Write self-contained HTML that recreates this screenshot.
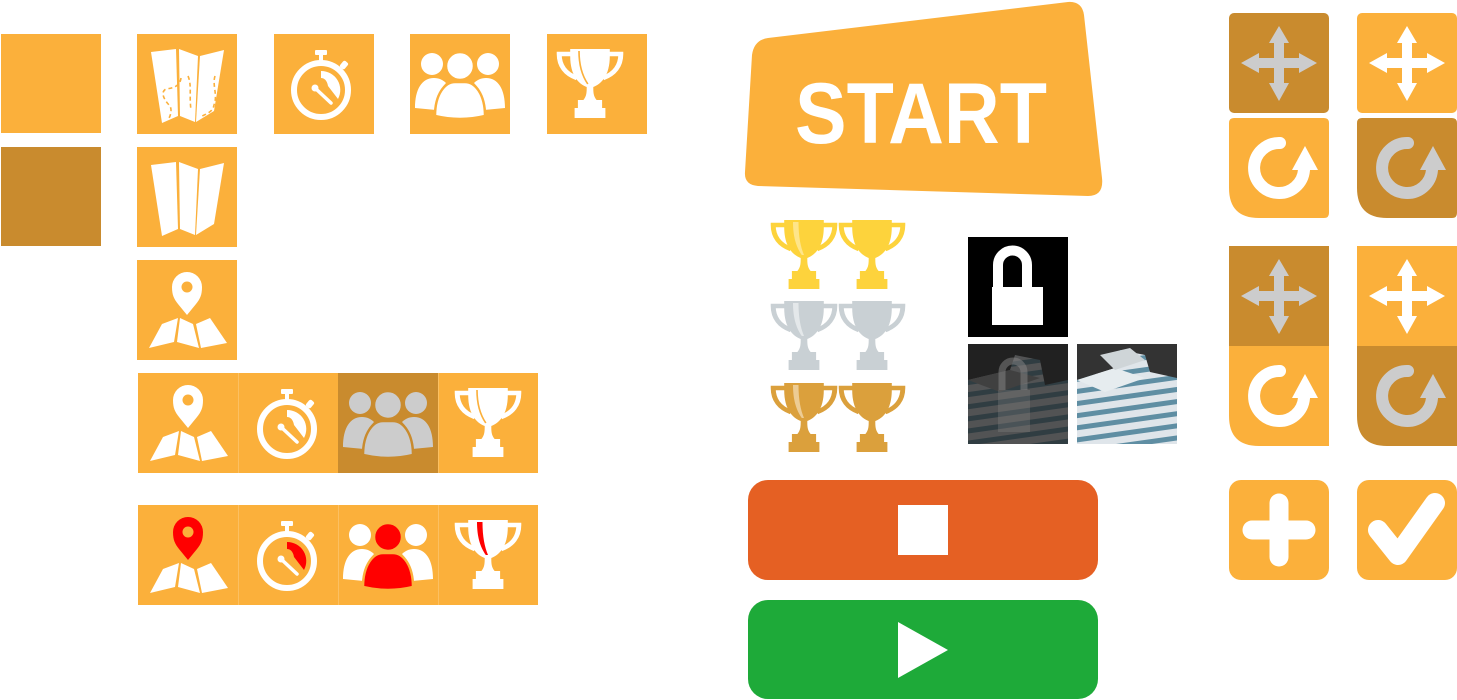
<!DOCTYPE html>
<html><head><meta charset="utf-8"><style>
html,body{margin:0;padding:0;background:#fff;width:1457px;height:700px;overflow:hidden}
svg{display:block}
</style></head><body>
<svg width="1457" height="700" viewBox="0 0 1457 700" xmlns="http://www.w3.org/2000/svg">
<defs>
<g id="trophy">
 <path d="M32,15 H68 V22 C68,42 60,50 53,53 C53,58 53,62 56,66 H61 V74 H64 V84 H36 V74 H39 V66 H44 C47,62 47,58 47,53 C40,50 32,42 32,22 Z" fill="currentColor"/>
 <path d="M33,20 H22 C22,32 28,40 38,44 M67,20 H78 C78,32 72,40 62,44" fill="none" stroke="currentColor" stroke-width="4.5"/>
 <path d="M40,17 L45,17 C45,32 47,42 50,50 L48,50 C43,42 40,32 40,17 Z" style="fill:var(--stripe,none)"/>
 <path d="M40,17 C40,32 43,42 48,50" fill="none" style="stroke:var(--sline,none)" stroke-width="1.5"/>
</g>
<g id="watch">
 <circle cx="47" cy="56" r="27" fill="none" stroke="#fff" stroke-width="6"/>
 <rect x="41" y="16" width="12" height="5" rx="1" fill="#fff"/>
 <rect x="45" y="20" width="4" height="7" fill="#fff"/>
 <rect x="67" y="27" width="6" height="8" rx="2" transform="rotate(40 70 31)" fill="#fff"/>
 <path d="M47,37 A19,19 0 0,1 64,65 L54,52 C53,46 50,44 47,44 Z" style="fill:var(--wedge,#fff)"/>
 <path d="M41,54 L57,69" stroke="#fff" stroke-width="3.5" stroke-linecap="round"/>
 <circle cx="41" cy="54" r="3.5" fill="#fff"/>
</g>
<g id="people">
 <circle cx="22" cy="30" r="11" fill="currentColor"/>
 <circle cx="78" cy="30" r="11" fill="currentColor"/>
 <path d="M5,74 C5,55 12,44 24,44 C29,44 33,46 36,49 C29,56 26,65 26,76 Z" fill="currentColor"/>
 <path d="M95,74 C95,55 88,44 76,44 C71,44 67,46 64,49 C71,56 74,65 74,76 Z" fill="currentColor"/>
 <circle cx="50" cy="32" r="14" style="fill:var(--mid,currentColor);stroke:var(--bg)" stroke-width="2.5"/>
 <path d="M25,82 C25,60 35,48 45,48 H55 C65,48 75,60 75,82 Q50,88 25,82 Z" style="fill:var(--mid,currentColor);stroke:var(--bg)" stroke-width="2.5"/>
</g>
<g id="mapfold" fill="#fff">
 <path d="M14,18 L39,15 L41,82 L25,89 Z"/>
 <path d="M42,15 L61,22 L58,88 L43,82 Z"/>
 <path d="M63,22 L87,16 L77,77 L59,88 Z"/>
</g>
<g id="pinmap">
 <path d="M50,55 L41,44 C37,39 35,35 35,27 A15,15 0 0,1 65,27 C65,35 63,39 59,44 Z" style="fill:var(--pin,#fff)"/>
 <circle cx="50" cy="27" r="5.5" fill="#FBB03B"/>
 <g fill="#fff">
 <path d="M25,64 L41,58 L37,82 L12,88 Z"/>
 <path d="M43,58 L56,64 L62,88 L40,82 Z"/>
 <path d="M59,64 L73,58 L90,83 L64,88 Z"/>
 </g>
</g>
<path id="move" d="M50,13 L60,30 L55,30 L55,45 L70,45 L70,40 L88,50 L70,60 L70,55 L55,55 L55,70 L60,70 L50,88 L40,70 L45,70 L45,55 L30,55 L30,60 L12,50 L30,40 L30,45 L45,45 L45,30 L40,30 Z" fill="currentColor"/>
<g id="rot">
 <path d="M51,25 A25,25 0 1,0 75,52" fill="none" stroke="currentColor" stroke-width="12" stroke-linecap="round"/>
 <path d="M63,52 L76,28 L89,52 Z" fill="currentColor"/>
</g>
<pattern id="stripes" width="10" height="12" patternUnits="userSpaceOnUse" patternTransform="rotate(-8)">
 <rect width="10" height="12" fill="#dfe5ea"/><rect y="7" width="10" height="5" fill="#5f8ea3"/>
</pattern>
</defs>

<rect x="1" y="34" width="100" height="99" fill="#FBB03B"/>
<rect x="1" y="147" width="100" height="99" fill="#C98B2E"/>

<rect x="137" y="34" width="100" height="100" fill="#FBB03B"/>
<use href="#mapfold" x="137" y="34"/>
<g fill="none" stroke="#FBB03B" stroke-width="1.6" stroke-dasharray="4 3">
 <path d="M181,78 C180,86 174,88 166,89 C160,92 164,100 170,106 C172,110 171,115 168,120"/>
 <path d="M188,76 C192,85 189,95 191,110"/>
 <path d="M215,76 C212,85 218,95 214,105 C213,112 206,114 202,116"/>
</g>
<rect x="274" y="34" width="100" height="100" fill="#FBB03B"/>
<use href="#watch" x="274" y="34"/>
<rect x="410" y="34" width="100" height="100" fill="#FBB03B"/>
<use href="#people" x="410" y="34" color="#fff" style="--bg:#FBB03B"/>
<rect x="547" y="34" width="100" height="100" fill="#FBB03B"/>
<g transform="translate(535,34) scale(1.1,1)"><use href="#trophy" color="#fff" style="--sline:#FBB03B"/></g>

<rect x="137" y="147" width="100" height="100" fill="#FBB03B"/>
<use href="#mapfold" x="137" y="147"/>
<rect x="137" y="260" width="100" height="100" fill="#FBB03B"/>
<use href="#pinmap" x="137" y="260"/>

<rect x="138" y="373" width="400" height="100" fill="#FBB03B"/>
<rect x="338" y="373" width="100" height="100" fill="#C98B2E"/>
<g stroke="#fcc061" stroke-width="1"><path d="M238.5,373V473M438.5,373V473"/></g>
<use href="#pinmap" x="138" y="373"/>
<use href="#watch" x="240" y="373"/>
<use href="#people" x="338" y="373" color="#cccccc" style="--bg:#C98B2E"/>
<g transform="translate(433,373) scale(1.1,1)"><use href="#trophy" color="#fff" style="--sline:#FBB03B"/></g>

<rect x="138" y="505" width="400" height="100" fill="#FBB03B"/>
<g stroke="#fcc061" stroke-width="1"><path d="M238.5,505V605M338.5,505V605M438.5,505V605"/></g>
<use href="#pinmap" x="138" y="505" style="--pin:#FF0000"/>
<use href="#watch" x="240" y="505" style="--wedge:#FF0000"/>
<use href="#people" x="338" y="505" color="#fff" style="--bg:#FBB03B;--mid:#FF0000"/>
<g transform="translate(433,505) scale(1.1,1)"><use href="#trophy" color="#fff" style="--stripe:#FF0000"/></g>

<path d="M768,38 L1068,2 Q1082,1 1084,15 L1102,178 Q1104,196 1088,196 L758,186 Q744,185 745,172 L752,55 Q754,40 768,38 Z" fill="#FBB03B"/>
<text x="795" y="143" font-family="Liberation Sans, sans-serif" font-weight="bold" font-size="86" fill="#fff" textLength="252" lengthAdjust="spacingAndGlyphs">START</text>

<g transform="translate(749,205) scale(1.1,1.0)"><use href="#trophy" color="#FDD33C" style="--stripe:#FEE58A"/></g>
<g transform="translate(817,205) scale(1.1,1.0)"><use href="#trophy" color="#FDD33C"/></g>
<g transform="translate(749,286) scale(1.1,1.0)"><use href="#trophy" color="#C9D0D4" style="--stripe:#E4E8EA"/></g>
<g transform="translate(817,286) scale(1.1,1.0)"><use href="#trophy" color="#C9D0D4"/></g>
<g transform="translate(749,368) scale(1.1,1.0)"><use href="#trophy" color="#DBA03C" style="--stripe:#EDCC94"/></g>
<g transform="translate(817,368) scale(1.1,1.0)"><use href="#trophy" color="#DBA03C"/></g>

<rect x="968" y="237" width="100" height="100" fill="#000"/>
<path d="M998,287 V265 A14.5,14.5 0 0,1 1027,265 V287" fill="none" stroke="#fff" stroke-width="10"/>
<rect x="992" y="287" width="51" height="38" fill="#fff"/>

<rect x="968" y="344" width="100" height="100" fill="#262626"/>
<path d="M968,380 L1010,370 L1015,355 L1040,360 L1045,385 L1068,380 L1068,444 L968,444 Z" fill="url(#stripes)" opacity="0.4"/>
<path d="M968,380 L1010,370 L1040,378 L1000,392 Z" fill="#555"/>
<rect x="968" y="344" width="100" height="100" fill="#1a1a1a" opacity="0.35"/>
<path d="M1002,390 V372 A11,11 0 0,1 1024,372 V390" fill="none" stroke="#888" stroke-width="7" opacity="0.5"/>
<rect x="998" y="390" width="32" height="42" fill="#888" opacity="0.3"/>
<rect x="1077" y="344" width="100" height="100" fill="#333"/>
<path d="M1077,380 L1115,368 L1120,350 L1145,355 L1150,372 L1177,378 L1177,444 L1077,444 Z" fill="url(#stripes)"/>
<path d="M1077,380 L1115,368 L1145,378 L1105,392 Z" fill="#e6ecef"/>
<path d="M1100,355 L1130,348 L1145,360 L1115,370 Z" fill="#cfd5d8"/>

<rect x="748" y="480" width="350" height="100" rx="20" fill="#E56023"/>
<rect x="898" y="505" width="50" height="50" fill="#fff"/>
<rect x="748" y="600" width="350" height="99" rx="20" fill="#1EAA39"/>
<path d="M898,622 L948,650 L898,678 Z" fill="#fff"/>

<rect x="1229" y="13" width="100" height="100" rx="5" fill="#C98B2E"/>
<use href="#move" x="1229" y="13" color="#cccccc"/>
<rect x="1357" y="13" width="100" height="100" rx="5" fill="#FBB03B"/>
<use href="#move" x="1357" y="13" color="#fff"/>
<path d="M1234,118 H1324 Q1329,118 1329,123 V213 Q1329,218 1324,218 H1259 Q1229,218 1229,188 V123 Q1229,118 1234,118 Z" fill="#FBB03B"/>
<use href="#rot" x="1229" y="118" color="#fff"/>
<path d="M1362,118 H1452 Q1457,118 1457,123 V213 Q1457,218 1452,218 H1387 Q1357,218 1357,188 V123 Q1357,118 1362,118 Z" fill="#C98B2E"/>
<use href="#rot" x="1357" y="118" color="#cccccc"/>

<rect x="1229" y="246" width="100" height="100" fill="#C98B2E"/>
<use href="#move" x="1229" y="246" color="#cccccc"/>
<path d="M1229,346 H1329 V446 H1259 Q1229,446 1229,416 Z" fill="#FBB03B"/>
<use href="#rot" x="1229" y="346" color="#fff"/>
<rect x="1357" y="246" width="100" height="100" fill="#FBB03B"/>
<use href="#move" x="1357" y="246" color="#fff"/>
<path d="M1357,346 H1457 V446 H1387 Q1357,446 1357,416 Z" fill="#C98B2E"/>
<use href="#rot" x="1357" y="346" color="#cccccc"/>

<rect x="1229" y="480" width="100" height="100" rx="12" fill="#FBB03B"/>
<path d="M1279,503 V557 M1252,530 H1306" stroke="#fff" stroke-width="19" stroke-linecap="round"/>
<rect x="1357" y="480" width="100" height="100" rx="12" fill="#FBB03B"/>
<path d="M1378,530 L1398,555 L1435,503" fill="none" stroke="#fff" stroke-width="20" stroke-linecap="round" stroke-linejoin="round"/>
</svg>
</body></html>
